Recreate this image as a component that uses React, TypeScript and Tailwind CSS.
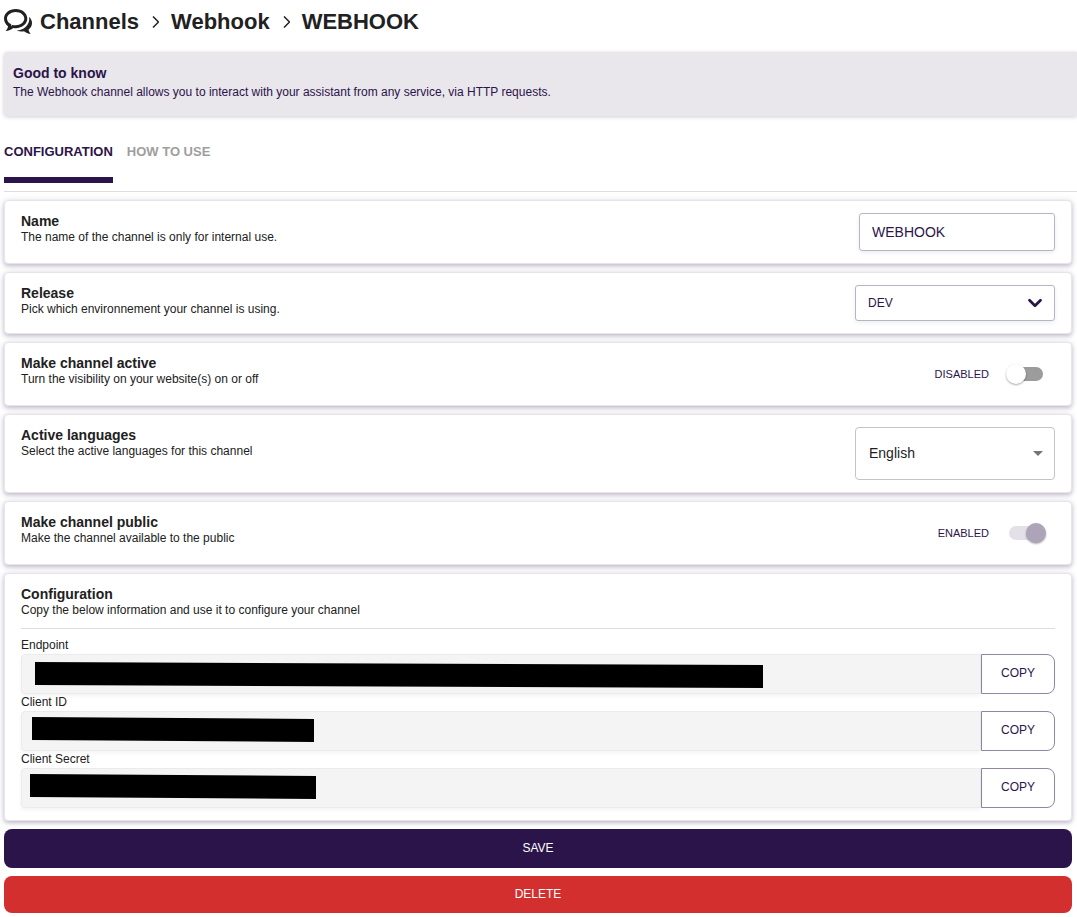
import { useId, useState } from "react";
import { ChevronDown } from "lucide-react";

interface FieldRowProps {
  label: string;
  bar: string;
}

interface SettingCardProps {
  title: string;
  description: string;
  children: React.ReactNode;
}

const card =
  "rounded border border-[#e7e4ec] bg-white px-4 py-3 shadow-[0_2px_4px_rgba(43,20,73,0.25),0_0_8px_rgba(43,20,73,0.08)]";

function SettingCard({ title, description, children }: SettingCardProps) {
  return (
    <section className={`${card} flex items-start justify-between`}>
      <div>
        <h2 className="text-[14px] leading-4 font-bold">{title}</h2>
        <p className="text-[12px] leading-4">{description}</p>
      </div>
      {children}
    </section>
  );
}

function CommentsIcon() {
  return (
    <svg viewBox="0 0 28 26" className="mr-2 h-[26px] w-7" fill="currentColor" aria-hidden="true">
      <path
        fillRule="evenodd"
        d="M11.7 0C18.2 0 23.3 4.2 23.3 9.6S18.2 19.2 11.7 19.2c-.9 0-1.7-.1-2.5-.2C7.200 20.700 4.700 21.800 1.700 21.900c1.300-1.200 2.200-2.900 2.300-4.600C1.500 15.500 0 12.700 0 9.600 0 4.200 5.200 0 11.700 0zm0 3C6.900 3 3 6 3 9.600c0 2.500 1.600 4.600 4.400 5.900l-.3 1.800 1.300-1.400c1 .3 2.100.4 3.300.4 4.800 0 8.600-3 8.600-6.700S16.500 3 11.700 3z"
      />
      <path d="M24.900 7.700C26.900 9.400 28 11.600 28 14c0 2.700-1.300 5-3.400 6.500.1 1.600.8 3.100 2.100 4.300-2.600-.1-4.900-1-6.700-2.600-2.500.5-5.200.2-7.400-.8C19.600 21.200 25.300 16 25.300 9.900c0-.8-.1-1.500-.4-2.200z" />
    </svg>
  );
}

function Separator() {
  return (
    <svg viewBox="0 0 8 12" className="mx-3 h-3 w-2" fill="none" stroke="currentColor" strokeWidth="1.5">
      <path d="M2 0.5l5.500 5.500-5.500 5.500" />
    </svg>
  );
}

function Breadcrumb() {
  return (
    <nav className="flex items-center text-[22px] leading-7 font-bold">
      <CommentsIcon />
      <a href="#channels">Channels</a>
      <Separator />
      <a href="#webhook">Webhook</a>
      <Separator />
      <h1>WEBHOOK</h1>
    </nav>
  );
}

function Toggle({ name, defaultOn, disabled }: { name: string; defaultOn: boolean; disabled?: boolean }) {
  const [on, setOn] = useState(defaultOn);

  return (
    <label className="flex h-[38px] items-center gap-[17px] text-[11px] text-[#2b1449]">
      {on ? "ENABLED" : "DISABLED"}
      <span className="relative mr-[9px] flex h-5 w-10 items-center">
        <input
          type="checkbox"
          aria-label={name}
          checked={on}
          disabled={disabled}
          onChange={(e) => setOn(e.target.checked)}
          className="peer absolute inset-0 z-10 m-0 opacity-0"
        />
        <span className="mx-[3px] h-[14px] w-full rounded-full bg-[#9c9c9c] peer-checked:bg-[#e3e0e8]" />
        <span className="absolute left-0 h-5 w-5 rounded-full bg-white shadow-[0_1px_2px_rgba(0,0,0,0.35)] peer-checked:left-5 peer-checked:bg-[#aea4b9]" />
      </span>
    </label>
  );
}

function FieldRow({ label, bar }: FieldRowProps) {
  const id = useId();

  return (
    <div>
      <label htmlFor={id} className="block text-[12px] leading-[17px]">
        {label}
      </label>
      <div className="flex h-10">
        <div className="relative flex-1">
          <input
            id={id}
            readOnly
            className="h-full w-full rounded-l border border-[#ebebeb] bg-[#f4f4f4] px-3 text-sm shadow-[0_2px_4px_rgba(0,0,0,0.05)]"
          />
          {/* strip that hides the value */}
          <svg className="pointer-events-none absolute inset-0 h-full w-full">
            <polygon points={bar} />
          </svg>
        </div>
        <button
          type="button"
          className="w-[74px] rounded-r-lg border border-[#9186a3] bg-white pb-[2px] text-[12px] text-[#2b1449]"
        >
          COPY
        </button>
      </div>
    </div>
  );
}

export default function App() {
  return (
    <main className="pt-2 pl-1 font-['Liberation_Sans',Arial,sans-serif] text-[#212121]">
      <Breadcrumb />

      <aside className="mt-4 h-16 rounded-l bg-[#e9e6ec] px-[9px] pt-3 text-[#2b1449] shadow-[0_1px_4px_rgba(0,0,0,0.2)]">
        <h2 className="text-[14px] leading-[18px] font-bold">Good to know</h2>
        <p className="text-[12px] leading-5">
          The Webhook channel allows you to interact with your assistant from any service, via HTTP requests.
        </p>
      </aside>

      <div
        role="tablist"
        className="mt-6 flex h-[52px] items-start gap-[14px] border-b border-[#dedede] text-[13px] font-bold"
      >
        <button
          type="button"
          role="tab"
          aria-selected="true"
          className="h-[43px] border-b-6 border-[#2b1449] pb-[14px] text-[#2b1449]"
        >
          CONFIGURATION
        </button>
        <button type="button" role="tab" aria-selected="false" className="h-[43px] pb-5 text-[#9e9e9e]">
          HOW TO USE
        </button>
      </div>

      <form className="mt-2 mr-[5px] flex flex-col gap-2" onSubmit={(e) => e.preventDefault()}>
        <SettingCard title="Name" description="The name of the channel is only for internal use.">
          <input
            aria-label="Name"
            defaultValue="WEBHOOK"
            className="h-[38px] w-[196px] rounded-[3px] border border-[#b9b3c6] px-3 text-[14px] text-[#2b1449] shadow-[0_2px_4px_rgba(43,20,73,0.08)]"
          />
        </SettingCard>

        <SettingCard title="Release" description="Pick which environnement your channel is using.">
          <div className="relative">
            <select
              aria-label="Release"
              className="block h-9 w-[200px] appearance-none rounded-[3px] border border-[#b9b3c6] bg-white px-3 text-[12px] text-[#2b1449] shadow-[0_2px_4px_rgba(43,20,73,0.08)]"
            >
              <option>DEV</option>
            </select>
            <ChevronDown
              className="pointer-events-none absolute top-[7px] right-[9px] text-[#2b1449]"
              size={22}
              strokeWidth={3}
            />
          </div>
        </SettingCard>

        <SettingCard title="Make channel active" description="Turn the visibility on your website(s) on or off">
          <Toggle name="Make channel active" defaultOn={false} />
        </SettingCard>

        <SettingCard title="Active languages" description="Select the active languages for this channel">
          <div className="relative">
            <select
              aria-label="Active languages"
              className="block h-[53px] w-[200px] appearance-none rounded border border-[#c4c4c4] bg-white px-[13px] text-[14px]"
            >
              <option>English</option>
            </select>
            <svg viewBox="0 0 10 5" className="pointer-events-none absolute top-6 right-3 h-[5px] w-[10px]" fill="#757575">
              <path d="M0 0h10L5 5z" />
            </svg>
          </div>
        </SettingCard>

        <SettingCard title="Make channel public" description="Make the channel available to the public">
          <Toggle name="Make channel public" defaultOn disabled />
        </SettingCard>

        <section className={card}>
          <h2 className="text-[14px] leading-4 font-bold">Configuration</h2>
          <p className="text-[12px] leading-4">Copy the below information and use it to configure your channel</p>
          <hr className="mt-[10px] mb-2 border-[#dedede]" />
          <FieldRow label="Endpoint" bar="14,8 742,11 742,34 14,31" />
          <FieldRow label="Client ID" bar="11,6 293,8 293,31 11,29" />
          <FieldRow label="Client Secret" bar="9,6 295,8 295,31 9,29" />
        </section>

        <button type="submit" className="h-[39px] rounded-lg bg-[#2b1449] pb-[2px] text-[12px] text-white">
          SAVE
        </button>
        <button type="button" className="h-[37px] rounded-lg bg-[#d32f2f] pb-[2px] text-[12px] text-white">
          DELETE
        </button>
      </form>
    </main>
  );
}
